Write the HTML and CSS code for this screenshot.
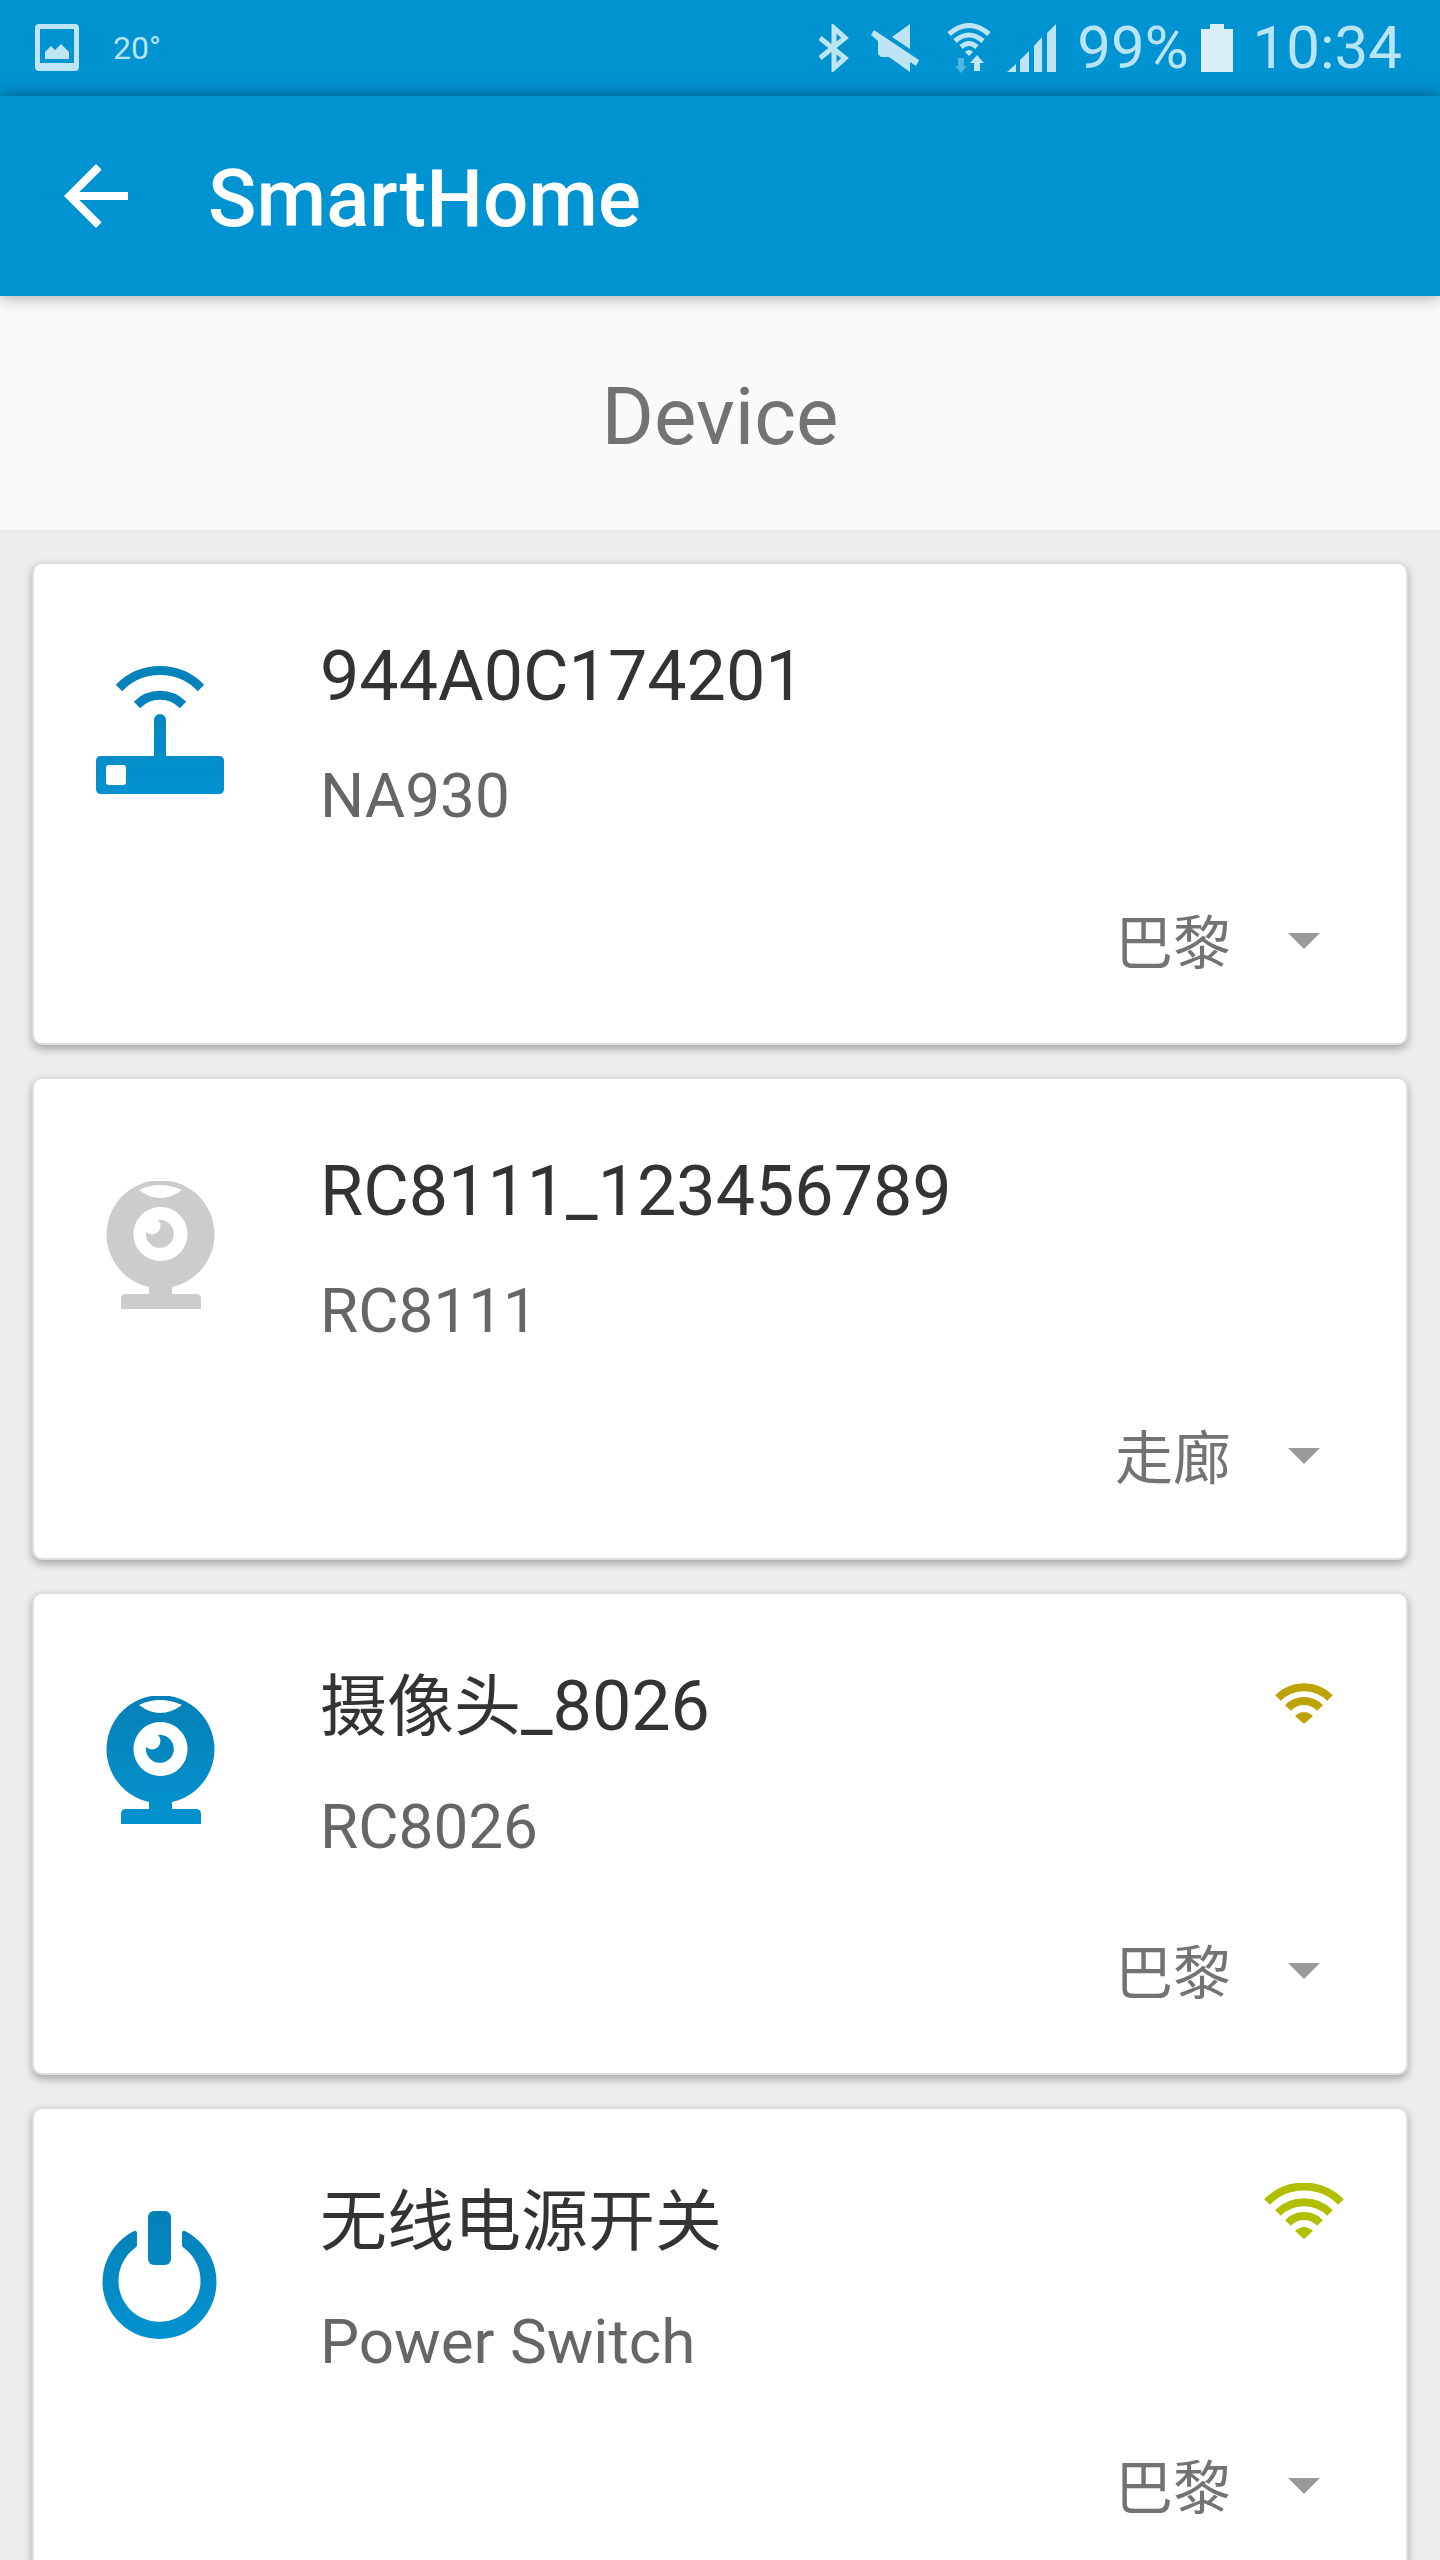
FILE: index.html
```
<!DOCTYPE html>
<html lang="en">
<head>
<meta charset="utf-8">
<meta name="viewport" content="width=device-width, initial-scale=1">
<title>SmartHome</title>
<link rel="stylesheet" href="styles.css">
</head>
<body>
<svg class="defs" aria-hidden="true">
  <defs>
    <linearGradient id="blue" gradientUnits="userSpaceOnUse" x1="0" y1="0" x2="0" y2="128">
      <stop offset="0" stop-color="#0480b6"/>
      <stop offset="0.7" stop-color="#058dc8"/>
      <stop offset="1" stop-color="#0092cf"/>
    </linearGradient>
    <symbol id="camera" viewBox="0 0 128 128">
      <path fill-rule="evenodd" d="M76 106v7h24q5 0 5 5v10H25v-10q0-5 5-5h23v-7A54 54 0 1 1 76 106zM43 9Q64 -1 86 9Q64 25 43 9zM64 26a27 27 0 1 0 1 0z"/>
      <path d="M62 39A14 14 0 1 1 50 51A7 7 0 0 0 62 39z"/>
    </symbol>
  </defs>
</svg>

<div class="status-bar">
  <div class="status-group status-left">
    <svg width="44" height="48" viewBox="0 0 44 48" class="tint"><path fill-rule="evenodd" d="M4 0h36q4 0 4 4v39q0 4-4 4H4q-4 0-4-4V4q0-4 4-4zM5 5v34h34V5z"/><path d="M10 35v-7l6-6 4 4 6-6 8 8v7z"/></svg>
    <span class="temperature">20°</span>
  </div>
  <div class="status-group status-right">
    <svg width="32" height="48" viewBox="0 0 32 48" class="line"><path d="M1 14l25 20-11 10V4l11 10L1 34"/></svg>
    <svg width="48" height="48" viewBox="0 0 48 48" class="tint mute"><path d="M39 0v25L21 13zM3 6L48 36l-3 6-6-4v10L18 33H10l-3-3V17L0 11z"/></svg>
    <svg width="44" height="50" viewBox="0 0 44 50" class="wifi-data"><g class="arcs"><path d="M2 11Q22-6 42 11M8 18Q22 6 36 18M14 24Q22 17 30 24"/></g><path class="tint" d="M18 29q4-4 8 0l-4 4zM30 32l7 8h-4v8h-6v-8h-4z"/><path class="faint" d="M11 35h6v8h3l-6 7-6-7h3z"/></svg>
    <svg width="50" height="48" viewBox="0 0 50 48" class="tint signal"><path d="M0 48l9-8v8zM13 48V36l9-9v21zM27 48V22l8-9v35zM40 48V9l9-9v48z"/></svg>
    <span>99%</span>
    <svg width="32" height="48" viewBox="0 0 32 48" class="battery"><path d="M9 0h14v5h9v43H0V5h9z"/></svg>
    <time>10:34</time>
  </div>
</div>

<header class="app-bar">
  <button class="back" type="button" aria-label="Back">
    <svg width="96" height="96" viewBox="0 0 24 24"><path d="M20 11H7.83l5.59-5.59L12 4l-8 8 8 8 1.41-1.41L7.83 13H20z"/></svg>
  </button>
  <h1>SmartHome</h1>
</header>

<h2 class="section-title">Device</h2>

<main class="devices">
  <article class="card">
    <svg class="device-icon online" viewBox="0 0 128 128">
      <path fill-rule="evenodd" d="M5 90H58V54a6 6 0 0 1 12 0V90H123q5 0 5 5v28q0 5-5 5H5q-5 0-5-5V95q0-5 5-5zM13 99q-3 0-3 3v14q0 3 3 3h14q3 0 3-3v-14q0-3-3-3z"/>
      <path class="waves" d="M23 22A57 57 0 0 1 105 22M41 39A32 32 0 0 1 87 39"/>
    </svg>
    <div class="info">
      <h3>944A0C174201</h3>
      <p>NA930</p>
    </div>
    <label class="room"><select aria-label="Room of 944A0C174201"><option selected>巴黎</option><option>走廊</option></select></label>
  </article>

  <article class="card">
    <svg class="device-icon offline"><use href="#camera"/></svg>
    <div class="info">
      <h3>RC8111_123456789</h3>
      <p>RC8111</p>
    </div>
    <label class="room"><select aria-label="Room of RC8111_123456789"><option>巴黎</option><option selected>走廊</option></select></label>
  </article>

  <article class="card">
    <svg class="device-icon online"><use href="#camera"/></svg>
    <div class="info">
      <h3><span class="han">摄像头</span>_8026</h3>
      <p>RC8026</p>
    </div>
    <svg class="strength fair" viewBox="0 0 80 56"><path class="arcs" d="M14 30A37 37 0 0 1 66 30M24 40A22 22 0 0 1 56 40"/><path d="M31 48Q40 40 49 48L40 56z"/></svg>
    <label class="room"><select aria-label="Room of 摄像头_8026"><option selected>巴黎</option><option>走廊</option></select></label>
  </article>

  <article class="card">
    <svg class="device-icon online" viewBox="0 0 128 128">
      <rect x="52" y="0" width="23" height="54" rx="6"/>
      <path d="M38 20Q41 19 41 23V34Q41 36 39 37A41 41 0 1 0 88 37Q86 36 86 34V23Q86 19 89 20A57 57 0 1 1 38 20z"/>
    </svg>
    <div class="info">
      <h3><span class="han">无线电源开关</span></h3>
      <p>Power Switch</p>
    </div>
    <svg class="strength good" viewBox="0 0 80 56"><path class="arcs" d="M3 19A52 52 0 0 1 77 19M14 30A37 37 0 0 1 66 30M24 40A22 22 0 0 1 56 40"/><path d="M31 48Q40 40 49 48L40 56z"/></svg>
    <label class="room"><select aria-label="Room of 无线电源开关"><option selected>巴黎</option><option>走廊</option></select></label>
  </article>
</main>
</body>
</html>
```
FILE: styles.css
```
* {
  box-sizing: border-box;
}

body {
  margin: 0;
  height: 100vh;
  display: flex;
  flex-direction: column;
  background: #ededed;
  font-family: Roboto, "Noto Sans CJK SC", sans-serif;
}

h1, h2, h3, p {
  margin: 0;
  font-weight: 400;
}

svg {
  display: block;
  flex: none;
}

.defs {
  position: absolute;
  width: 0;
  height: 0;
}

/* Status bar */

.status-bar {
  flex: none;
  height: 96px;
  padding: 0 38px 0 35px;
  display: flex;
  justify-content: space-between;
  align-items: center;
  background: #0093d1;
  color: #b9e4f5;
  font-size: 60px;
  line-height: 100px;
}

.status-group {
  display: flex;
  align-items: center;
}

.status-left {
  gap: 34px;
}

.temperature {
  font-size: 32px;
}

.status-right {
  gap: 20px;
}

.tint {
  fill: #bfe4f3;
}

.line {
  fill: none;
  stroke: #bfe4f3;
  stroke-width: 5;
}

.mute {
  margin-right: 8px;
}

.arcs {
  fill: none;
}

.wifi-data {
  margin-right: -4px;
}

.wifi-data .arcs {
  stroke: #bfe4f3;
  stroke-width: 5;
}

.wifi-data .faint {
  fill: #4fb6e2;
}

.battery {
  fill: #d9eef7;
  margin-left: -8px;
}

/* App bar */

.app-bar {
  flex: none;
  position: relative;
  height: 200px;
  padding: 0 48px;
  display: flex;
  align-items: center;
  gap: 64px;
  background: #0093d1;
  color: #fff;
  box-shadow: 0 0 16px rgba(0, 0, 0, 0.4);
}

.back {
  border: 0;
  padding: 0;
  background: none;
  fill: #fff;
}

.app-bar h1 {
  padding-top: 6px;
  font-size: 80px;
  font-weight: 500;
  line-height: 96px;
}

.section-title {
  flex: none;
  padding: 73px 0 65px;
  background: #fafafa;
  color: #737373;
  font-size: 80px;
  line-height: 96px;
  text-align: center;
}

/* Device list */

.devices {
  flex: 1;
  min-height: 0;
  padding: 32px;
  display: flex;
  flex-direction: column;
  gap: 32px;
  overflow-y: auto;
  scrollbar-width: none;
}

.card {
  flex: none;
  padding: 64px 62px 62px;
  display: grid;
  grid-template-columns: 128px 1fr auto;
  grid-template-rows: 215px auto;
  column-gap: 96px;
  border: 2px solid #dedede;
  border-radius: 10px;
  background: #fff;
  background-clip: padding-box;
  box-shadow: 0 4px 8px rgba(0, 0, 0, 0.3);
}

.device-icon {
  width: 128px;
  height: 128px;
  margin-top: 38px;
}

.online {
  fill: url(#blue);
}

.offline {
  fill: #ccc;
}

.waves {
  fill: none;
  stroke: #0483ba;
  stroke-width: 9;
}

.info h3 {
  color: #333;
  font-size: 70px;
  line-height: 96px;
}

.han {
  font-size: 67px;
}

.info p {
  margin-top: 32px;
  color: #666;
  font-size: 62px;
  line-height: 80px;
}

.strength {
  width: 80px;
  height: 56px;
  margin-top: 10px;
}

.strength .arcs {
  stroke-width: 8;
}

.fair {
  fill: #bda208;
  stroke: #bda208;
  stroke-width: 0;
}

.good {
  fill: #b0c000;
  stroke: #b0c000;
  stroke-width: 0;
}

.room {
  grid-column: 1 / -1;
  justify-self: end;
  padding: 58px 24px 0 0;
  display: flex;
  align-items: center;
  gap: 56px;
}

.room::after {
  content: "";
  border: 16px solid transparent;
  border-top-color: #999;
  border-bottom: 0;
  pointer-events: none;
}

.room select {
  appearance: none;
  height: 80px;
  border: 0;
  padding: 6px 0 0;
  background: none;
  color: #737373;
  font-family: inherit;
  font-size: 58px;
  line-height: 74px;
}
```
